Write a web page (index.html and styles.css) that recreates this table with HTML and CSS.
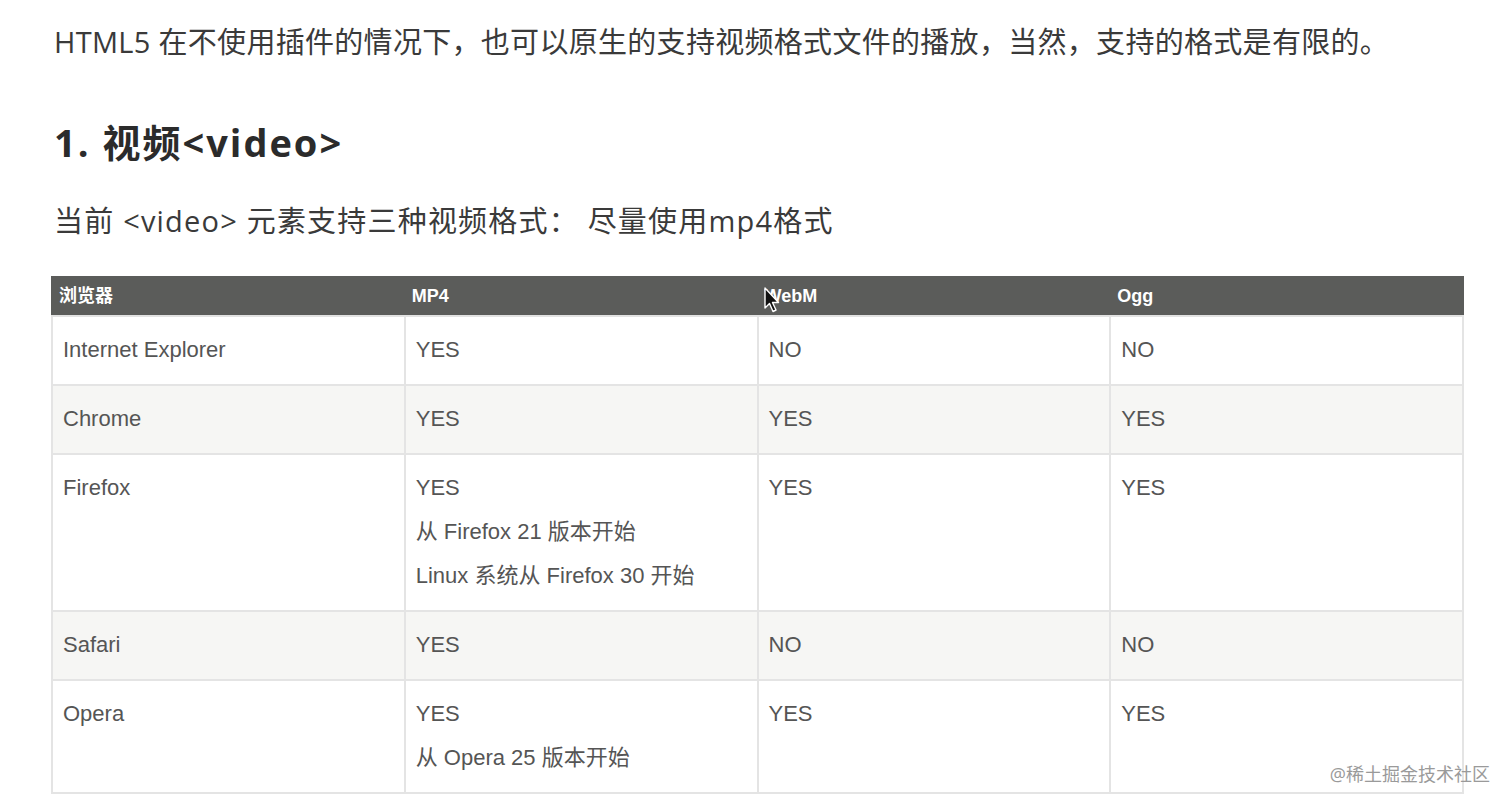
FILE: index.html
```html
<!DOCTYPE html>
<html lang="zh-CN">
<head>
<meta charset="utf-8">
<title>HTML5 视频</title>
<link rel="stylesheet" href="styles.css">
</head>
<body>
<main class="page">
  <p class="intro">HTML5 在不使用插件的情况下，也可以原生的支持视频格式文件的播放，当然，支持的格式是有限的。</p>
  <h2 class="title">1. 视频&lt;video&gt;</h2>
  <p class="lead">当前 &lt;video&gt; 元素支持三种视频格式： 尽量使用mp4格式</p>
  <table class="formats">
    <thead>
      <tr><th>浏览器</th><th>MP4</th><th>WebM</th><th>Ogg</th></tr>
    </thead>
    <tbody>
      <tr><td>Internet Explorer</td><td>YES</td><td>NO</td><td>NO</td></tr>
      <tr class="alt"><td>Chrome</td><td>YES</td><td>YES</td><td>YES</td></tr>
      <tr><td>Firefox</td><td>YES<div class="note">从 Firefox 21 版本开始</div><div class="note">Linux 系统从 Firefox 30 开始</div></td><td>YES</td><td>YES</td></tr>
      <tr class="alt"><td>Safari</td><td>YES</td><td>NO</td><td>NO</td></tr>
      <tr><td>Opera</td><td>YES<div class="note">从 Opera 25 版本开始</div></td><td>YES</td><td>YES</td></tr>
    </tbody>
  </table>
</main>
<svg class="cursor" width="16" height="26" viewBox="0 0 16 26"><path d="M1 1 L1 21 L5.5 16.5 L9 24.5 L12 23 L8.5 15.5 L14.5 15.5 Z" fill="#111" stroke="#fff" stroke-width="1.4" stroke-linejoin="round"/></svg>
<div class="watermark">@稀土掘金技术社区</div>
</body>
</html>
```

FILE: styles.css
```css
html, body {
  margin: 0;
  padding: 0;
  background: #ffffff;
}
body {
  font-family: "Open Sans", "Noto Sans CJK SC", sans-serif;
  color: #333333;
  position: relative;
  width: 1512px;
  height: 808px;
  overflow: hidden;
}
.page {
  padding: 22px 0 0 51px;
}
.intro {
  margin: 0;
  padding-left: 3px;
  font-size: 29px;
  line-height: 40px;
  color: #3a3a3a;
  letter-spacing: 0.3px;
}
.title {
  margin: 55px 0 0;
  padding-left: 3px;
  font-size: 38px;
  line-height: 50px;
  font-weight: 700;
  color: #2b2b2b;
  letter-spacing: 2px;
}
.lead {
  margin: 34px 0 0;
  padding-left: 3px;
  font-size: 29px;
  line-height: 40px;
  color: #3a3a3a;
  letter-spacing: 1.2px;
}
.formats {
  margin-top: 35px;
  width: 1413px;
  border-collapse: collapse;
  table-layout: fixed;
  font-family: "Liberation Sans", "Noto Sans CJK SC", sans-serif;
}
.formats th {
  background: #5b5c5a;
  color: #ffffff;
  text-align: left;
  font-size: 18px;
  font-weight: 700;
  line-height: 22px;
  padding: 7px 6px 8px;
  border: 2px solid #5b5c5a;
  border-bottom-color: #e2e2e2;
}
.formats td {
  vertical-align: top;
  font-size: 22px;
  line-height: 33px;
  color: #555555;
  padding: 16px 10px 18px;
  border: 2px solid #e4e4e4;
}
.formats tr.alt td {
  background: #f6f6f4;
}
.note {
  margin-top: 11px;
}
.cursor {
  position: absolute;
  left: 764px;
  top: 287px;
}
.watermark {
  position: absolute;
  right: 22px;
  bottom: 22px;
  font-size: 18px;
  line-height: 24px;
  color: #9a9a9a;
}
```
